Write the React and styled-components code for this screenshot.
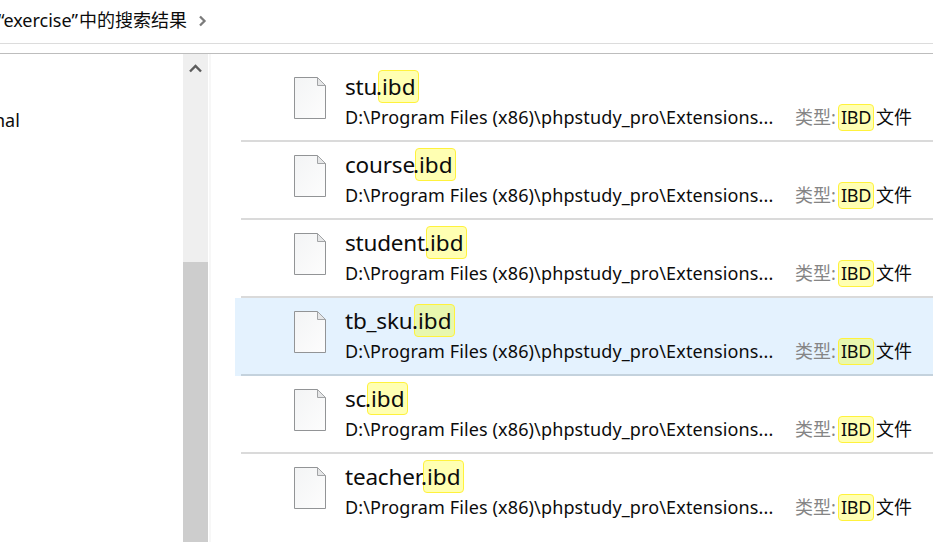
import React from "react";
import styled, { createGlobalStyle } from "styled-components";

const Global = createGlobalStyle`
  * { box-sizing: border-box; }
  body {
    margin: 0;
    overflow: hidden;
    background: #fff;
    color: #0c0c0c;
    font-family: "Noto Sans", "Noto Sans CJK SC", sans-serif;
  }
`;

const Window = styled.div`
  display: flex;
  flex-direction: column;
  width: 933px;
  height: 542px;
  overflow: hidden;
  background: #fff;
`;

const AddressBar = styled.header`
  display: flex;
  align-items: center;
  flex: none;
  height: 44px;
  padding-bottom: 3px;
  border-bottom: 1px solid #dcdcdc;
  font-size: 18px;
  white-space: nowrap;
`;

const Crumb = styled.span`
  display: flex;
  flex: none;
  width: 190px;
  margin-left: -2px;
  line-height: 24px;
`;

const Query = styled.span`
  flex: none;
  width: 81px;
  letter-spacing: 0;
`;

const CrumbArrow = styled.svg`
  margin: 2px 0 0 10px;
`;

const Divider = styled.div`
  flex: none;
  height: 10px;
  border-bottom: 1px solid #bdbdbd;
`;

const Body = styled.main`
  display: flex;
  flex: 1;
  min-height: 0;
`;

const Sidebar = styled.aside`
  width: 183px;
  padding-top: 54px;
  overflow: hidden;
  font-size: 18px;
  line-height: 24px;
`;

const SidebarItem = styled.div`
  margin-left: -6px;
`;

const Scrollbar = styled.div`
  display: flex;
  flex-direction: column;
  width: 25px;
  background: #efefef;
`;

const ScrollUp = styled.div`
  display: flex;
  justify-content: center;
  height: 208px;
  padding-top: 9px;
`;

const Thumb = styled.div`
  flex: 1;
  background: #cdcdcd;
`;

const Splitter = styled.div`
  width: 3px;
  margin-right: 24px;
  border-right: 2px solid #f7f7f7;
`;

const Results = styled.section`
  flex: 1;
  padding-top: 10px;
  overflow: hidden;
`;

const Row = styled.article`
  display: flex;
  height: 78px;
  padding-left: 58px;
  background:
    linear-gradient(${(p) => (p.$selected ? "#c4d2dd, #c4d2dd" : "#dadada, #dadada")}) 6px 100% / 100% 2px no-repeat,
    ${(p) => (p.$selected ? "#e4f2fe" : "#fff")};

  &:last-child {
    background: #fff;
  }
`;

const FileIcon = styled.svg`
  flex: none;
  margin: 12px 18px 0 0;
`;

const Info = styled.div`
  flex: 1;
  min-width: 0;
  white-space: nowrap;
`;

const Name = styled.div`
  display: flex;
  height: 40px;
  padding-top: 6px;
  font-size: 22.5px;
`;

const Stem = styled.span`
  width: ${(p) => p.$width}px;
  line-height: 33px;
  letter-spacing: -0.2px;
`;

const Mark = styled.mark`
  height: ${(p) => (p.$large ? 33 : 27)}px;
  width: ${(p) => (p.$large ? 41 : 36)}px;
  padding-left: ${(p) => (p.$large ? 0 : 2)}px;
  border: 1px solid #fff23c;
  border-radius: 4px;
  background: ${(p) => (p.$selected ? "#e8f7ae" : "#ffffb2")};
  color: inherit;
  line-height: ${(p) => (p.$large ? 31 : 24)}px;
  text-indent: ${(p) => (p.$large ? -3 : 0)}px;
  letter-spacing: ${(p) => (p.$large ? 0 : -0.3)}px;
`;

const Details = styled.div`
  display: flex;
  font-size: 18px;
  line-height: 26px;
`;

const Path = styled.span`
  width: 450px;
  letter-spacing: 0.13px;
`;

const TypeLabel = styled.span`
  width: 43px;
  color: #858585;
`;

const TypeName = styled.span`
  margin-left: 2px;
`;

const files = [
  { stem: "stu", width: 33 },
  { stem: "course", width: 70 },
  { stem: "student", width: 81 },
  { stem: "tb_sku", width: 69, selected: true },
  { stem: "sc", width: 22 },
  { stem: "teacher", width: 78 },
];

function FileRow({ stem, width, selected }) {
  return (
    <Row $selected={selected}>
      <FileIcon width="34" height="44" viewBox="0 0 34 44">
        <defs>
          <linearGradient id={`page-${stem}`} x1="0" y1="0" x2="1" y2="1">
            <stop offset="0" stopColor="#f3f4f5" />
            <stop offset="1" stopColor="#fdfdfd" />
          </linearGradient>
        </defs>
        <path d="M1.5 1.5H24.5L32.5 9.5V42.5H1.5Z" fill={`url(#page-${stem})`} stroke="#929496" />
        <path d="M24.5 1.5V9.5H32.5Z" fill="#e6e7e8" stroke="#a2a4a6" />
      </FileIcon>
      <Info>
        <Name>
          <Stem $width={width}>{stem}</Stem>
          <Mark $large $selected={selected}>.ibd</Mark>
        </Name>
        <Details>
          <Path>D:\Program Files (x86)\phpstudy_pro\Extensions...</Path>
          <TypeLabel>类型:</TypeLabel>
          <Mark $selected={selected}>IBD</Mark>
          <TypeName>文件</TypeName>
        </Details>
      </Info>
    </Row>
  );
}

export default function App() {
  return (
    <Window>
      <Global />
      <AddressBar>
        <Crumb>
          <Query>“exercise”</Query>
          <span>中的搜索结果</span>
        </Crumb>
        <CrumbArrow width="9" height="12" viewBox="0 0 9 12">
          <path d="M2 1.5L6.5 6L2 10.5" fill="none" stroke="#7b7b7b" strokeWidth="2.3" />
        </CrumbArrow>
      </AddressBar>
      <Divider />
      <Body>
        <Sidebar>
          <SidebarItem>nal</SidebarItem>
        </Sidebar>
        <Scrollbar>
          <ScrollUp>
            <svg width="13" height="11" viewBox="0 0 13 11">
              <path d="M1 8.5L6.5 3L12 8.5" fill="none" stroke="#5c5c5c" strokeWidth="2.4" />
            </svg>
          </ScrollUp>
          <Thumb />
        </Scrollbar>
        <Splitter />
        <Results>
          {files.map((file) => (
            <FileRow key={file.stem} {...file} />
          ))}
        </Results>
      </Body>
    </Window>
  );
}
